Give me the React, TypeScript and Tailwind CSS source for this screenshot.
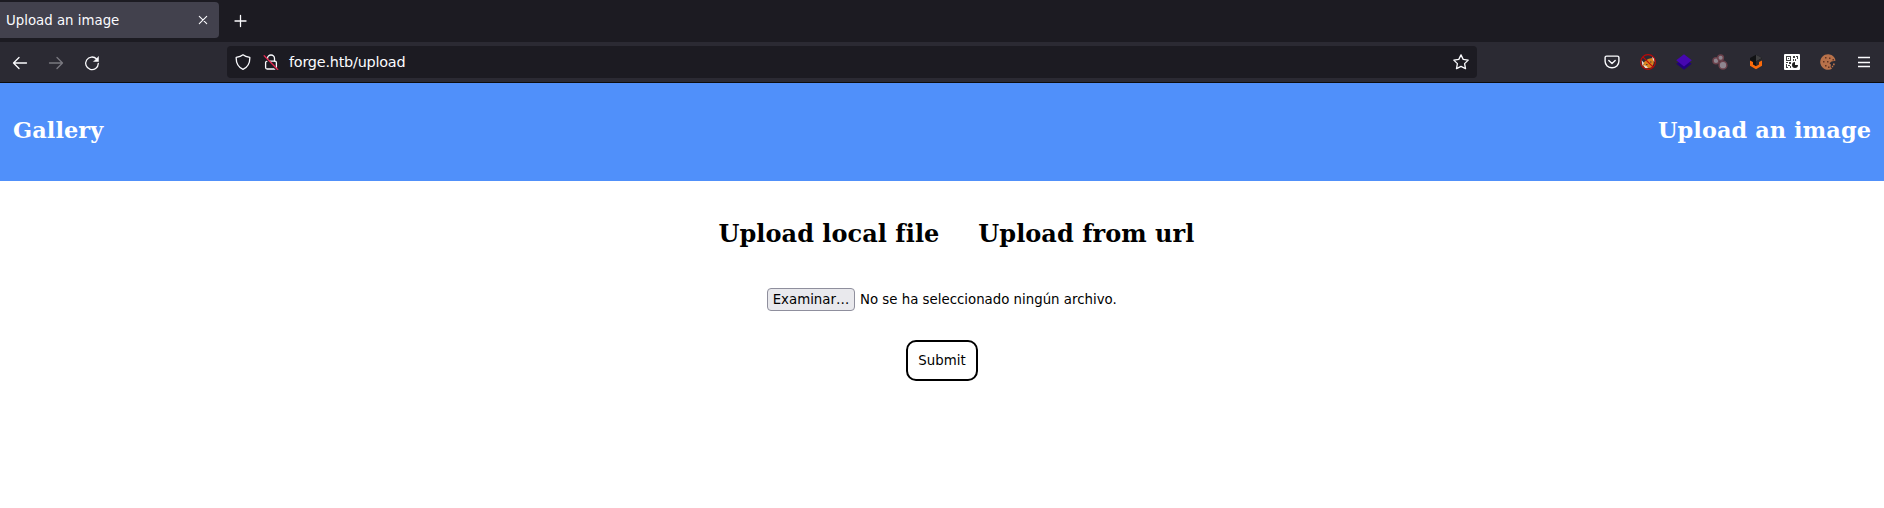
import type { ReactNode } from "react";

function Slot({ children }: { children: ReactNode }) {
  return <button className="flex h-10 w-9 items-center justify-center">{children}</button>;
}

const line = {
  width: 16,
  height: 16,
  viewBox: "0 0 16 16",
  fill: "none",
  stroke: "#fbfbfe",
  strokeWidth: 1.3,
  strokeLinecap: "round" as const,
  strokeLinejoin: "round" as const,
};

function TabStrip() {
  return (
    <div className="flex h-[42px] items-start bg-[#1c1b22] pt-[2px]">
      <div className="flex h-9 w-[219px] items-center justify-between rounded-r-[4px] bg-[#42414d] pl-[6px] pr-2">
        <span className="pt-[2px] text-[13.33px] leading-none">Upload an image</span>
        <svg {...line} strokeWidth={1.1}>
          <path d="M4.3 4.3l7.4 7.4M11.7 4.3l-7.4 7.4" />
        </svg>
      </div>
      <button className="ml-[13px] flex h-9 w-4 items-center justify-center pt-[1px]">
        <svg {...line}>
          <path d="M8.5 2.5v11M3 8h11" />
        </svg>
      </button>
    </div>
  );
}

function Toolbar() {
  return (
    <div className="flex h-[41px] items-start border-b border-[#0c0c0d] bg-[#2b2a33] px-[2px]">
      <Slot>
        <svg {...line} className="mt-[1px]">
          <path d="M14.5 8H1.5M7 2.5L1.5 8 7 13.5" />
        </svg>
      </Slot>
      <Slot>
        <svg {...line} className="mt-[1px]" stroke="#7a7980">
          <path d="M1.5 8h13M9 2.5L14.5 8 9 13.5" />
        </svg>
      </Slot>
      <Slot>
        <svg {...line} className="mt-[1px]">
          <path d="M12.6 4A6.3 6.3 0 1 0 14.3 8.5" />
          <path d="M14.5 1.8v4.7H9.8z" fill="#fbfbfe" strokeWidth={0.5} />
        </svg>
      </Slot>
      <div className="ml-[117px] mt-1 flex h-8 w-[1250px] items-center rounded-[4px] bg-[#1c1b22] px-2">
        <svg {...line}>
          <path d="M8 .8C6.5 2 3.5 3 1.2 3.4c-.2 5 1.8 9.6 6.8 11.9 5-2.3 7-6.9 6.8-11.9C12.5 3 9.5 2 8 .8z" />
        </svg>
        <svg {...line} className="ml-3">
          <path d="M4.5 7V4.5a3.5 3.5 0 0 1 7 0V7" />
          <rect x="2.6" y="7.2" width="10.8" height="7.8" rx="1.5" />
          <path d="M1.2 3.2l12.3 12.3" stroke="#1c1b22" strokeWidth={1.5} />
          <path d="M1.2 1.8l13.5 13.7" stroke="#e22850" />
        </svg>
        <span className="ml-[10px] text-[14.4px] leading-none tracking-[-0.22px]">forge.htb/upload</span>
        <svg {...line} className="ml-auto">
          <path d="M8 .9l2.2 4.5 5 .7-3.6 3.5.9 5L8 12.3l-4.5 2.3.9-5L.8 6.1l5-.7z" />
        </svg>
      </div>
      <div className="ml-auto flex">
        <Slot>
          <svg {...line} strokeWidth={1.4}>
            <path d="M2.6 2.1h10.8a1.5 1.5 0 0 1 1.5 1.5v3.7a6.9 6.5 0 0 1-13.8 0V3.6a1.5 1.5 0 0 1 1.5-1.5z" />
            <path d="M4.8 6.5L8 9.500l3.2-3" />
          </svg>
        </Slot>
        <Slot>
          <svg width="16" height="16" viewBox="0 0 16 16">
            <path d="M3.500 8.500L8 5l4-1 2 2-.5 4-2 3.500L6 14.500 3 12z" fill="#d9811e" />
            <path d="M1.500 6l2.500 3-1.500 3zM12 3l2.500 1v4L13 6zM3.500 11l3 1 1.500 2H5z" fill="#e8dfd8" />
            <path d="M6 10h1.500v1H6zM10 7.500h1.500v1H10z" fill="#413c3d" />
            <circle cx="8" cy="8" r="7.400" fill="none" stroke="#be0808" strokeWidth="1.100" />
            <path d="M2.800 2.800l10.400 10.400" stroke="#be0808" strokeWidth="1.200" />
          </svg>
        </Slot>
        <Slot>
          <svg width="16" height="16" viewBox="0 0 16 16">
            <path d="M.3 9.700l3.400-2.200h8.600l3.400 2.200L8 15.800z" fill="#22007c" />
            <path d="M8 .2l7.800 6.100L8 12.400.2 6.300z" fill="#4607b0" />
          </svg>
        </Slot>
        <Slot>
          <svg width="16" height="16" viewBox="0 0 16 16" fill="#8e858f" stroke="#6b414b" strokeWidth="1.500">
            <circle cx="4" cy="6.700" r="3" />
            <circle cx="8.600" cy="3.800" r="2.800" />
            <circle cx="11" cy="11.200" r="3.900" />
          </svg>
        </Slot>
        <Slot>
          <svg width="16" height="16" viewBox="0 0 16 16">
            <path d="M8 .8l6 3.200v6L8 13l-6-3V4z" fill="#111214" />
            <path d="M8 .8l6 3.200-6 3.500z" fill="#3f3f41" />
            <path d="M8 7.500L14 4v6l-6 3z" fill="#29292c" />
            <path d="M2 6.500l3 1.500v2.500l3 1.700 3-1.700V8l3-1.500v5.300L8 15.200l-6-3.400z" fill="#fb6a0a" />
          </svg>
        </Slot>
        <Slot>
          <svg width="16" height="16" viewBox="0 0 16 16">
            <rect width="16" height="16" rx="1" fill="#fff" />
            <path
              d="M2 2h5v5H2zM3 3v3h3V3zM9 2h2v2H9zM12 2h2v3h-1V3h-1zM9 5h1v2H9zM11 5h1v2h-1zM2 8h2v1H2zM5 8h2v2H5zM2 10h1v3h1v1H2zM4 11h2v1H4zM6 12h1v2H6zM4 4h1v1H4z"
              fill="#404040"
              fillRule="evenodd"
            />
            <path d="M11 8v3h3a3 3 0 1 1-3-3z" fill="#202020" />
          </svg>
        </Slot>
        <Slot>
          <svg width="16" height="16" viewBox="0 0 16 16">
            <path d="M8.500.2A7.800 7.800 0 1 0 12 14.700l-1.500-2 .5-2L9.500 9.200l2-1.700 4-.7C15.200 4 13.500 2 11.500 1z" fill="#b8714a" />
            <path d="M5 3h1.500v1.500H5zM9 3.500h1.500V5H9zM3 7h1.500v1.500H3zM7 7h1.500v1.500H7zM5 11h1.500v1.500H5zM8 12.500h1.500V14H8zM12.500 5H14v1.500h-1.500z" fill="#633421" />
            <path d="M13 9.500h1.700v1.700H13zM11.800 11.800h1.400v1.400h-1.400z" fill="#b8714a" />
          </svg>
        </Slot>
        <Slot>
          <svg {...line} strokeLinecap="butt" strokeWidth={1.3}>
            <path d="M2 3.500h12M2 8.500h12M2 12.500h12" />
          </svg>
        </Slot>
      </div>
    </div>
  );
}

export default function App() {
  return (
    <div className="flex h-[508px] w-[1884px] flex-col overflow-hidden bg-white font-['DejaVu_Sans',sans-serif]">
      <div className="text-[#fbfbfe]">
        <TabStrip />
        <Toolbar />
      </div>
      <header className="flex h-[98px] items-center justify-between bg-[#5090fa] px-[13px] pb-[2px] font-['DejaVu_Serif',serif] text-[22.4px] font-bold tracking-[0.08px] text-white">
        <a>Gallery</a>
        <a>Upload an image</a>
      </header>
      <main className="flex flex-col items-center text-[13.33px] text-black">
        <div className="mt-[35px] flex h-9 items-center gap-[39px] pl-[29px] font-['DejaVu_Serif',serif] text-2xl font-bold tracking-[0.04px]">
          <h2>Upload local file</h2>
          <h2>Upload from url</h2>
        </div>
        <div className="mt-[36px] flex h-[23px] w-[350px] items-center gap-[5px]">
          <button className="flex h-[23px] w-[88px] shrink-0 items-center justify-center rounded-[4px] border border-[#8f8f9d] bg-[#e9e9ed]">
            Examinar…
          </button>
          <span className="whitespace-nowrap">No se ha seleccionado ningún archivo.</span>
        </div>
        <button className="mt-[29px] flex h-[41px] w-[72px] items-center justify-center rounded-[10px] border-2 border-black bg-white">
          Submit
        </button>
      </main>
    </div>
  );
}
